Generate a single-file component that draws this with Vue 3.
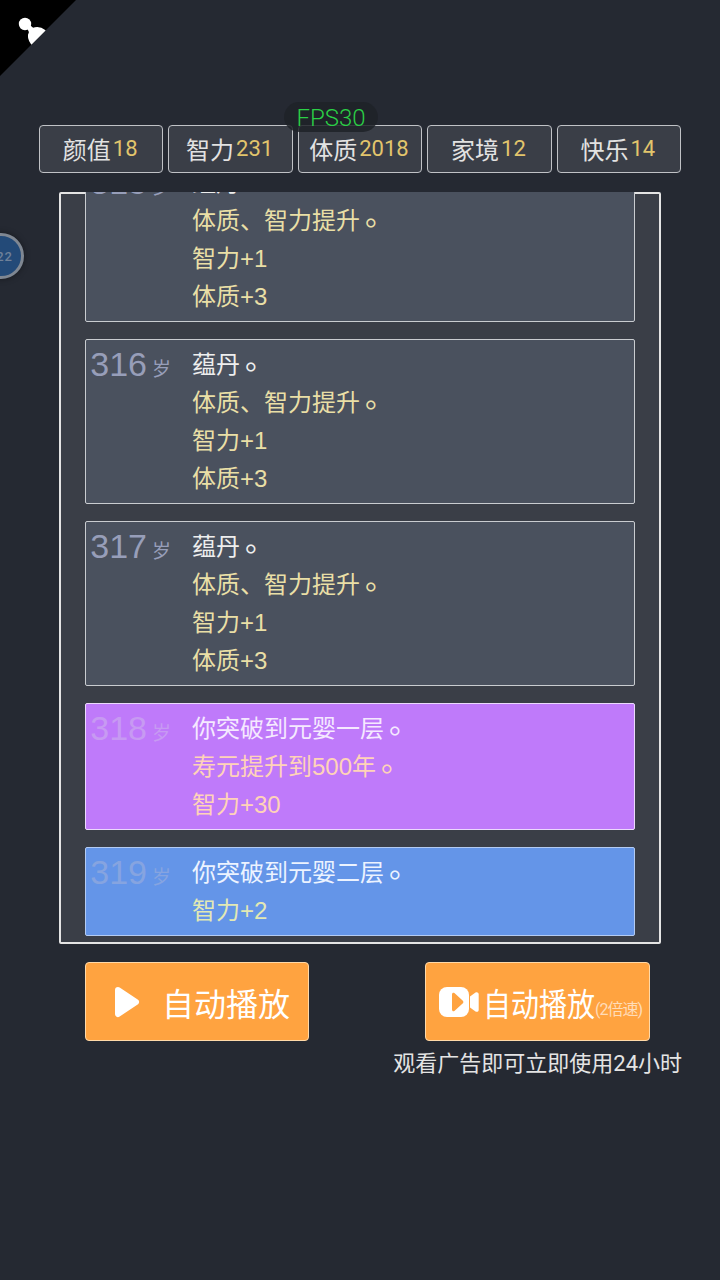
<script setup>
const stats = [
  { name: '颜值', value: 18 },
  { name: '智力', value: 231 },
  { name: '体质', value: 2018 },
  { name: '家境', value: 12 },
  { name: '快乐', value: 14 }
]

const base = ['蕴丹。', '体质、智力提升。', '智力+1', '体质+3']

const rows = [
  { age: 315, lines: base },
  { age: 316, lines: base },
  { age: 317, lines: base },
  { age: 318, grade: 'purple', lines: ['你突破到元婴一层。', '寿元提升到500年。', '智力+30'] },
  { age: 319, grade: 'blue', lines: ['你突破到元婴二层。', '智力+2'] }
]

// 句号单独包一层，位置比字体默认的偏上
const body = (t) => t.replace(/。$/, '')
</script>

<template>
  <div class="page">
    <!-- 左上角 -->
    <div class="corner">
      <svg class="pawn" viewBox="0 0 76 76" width="76" height="76">
        <circle cx="25" cy="24" r="6.200" fill="#fff" />
        <path d="M26 23l7 6c4-2 8-1 12 2L32 44c-3-4-4-8-2-12z" fill="#fff" stroke="#fff" stroke-width="2" stroke-linejoin="round" />
      </svg>
    </div>

    <div class="avatar"><span>22</span></div>
    <div class="fps">FPS30</div>

    <div class="stats">
      <div class="stat" v-for="s in stats" :key="s.name">
        {{ s.name }} <span class="num">{{ s.value }}</span>
      </div>
    </div>

    <div class="panel">
      <div class="list">
        <div class="card" v-for="r in rows" :key="r.age" :class="r.grade">
          <div class="age"><span class="year">{{ r.age }}</span><span class="unit">岁</span></div>
          <div class="lines">
            <div class="line" v-for="(t, i) in r.lines" :key="i" :class="{ first: i === 0 }">
              {{ body(t) }}<span class="stop" v-if="t.endsWith('。')">。</span>
            </div>
          </div>
        </div>
      </div>
    </div>

    <div class="actions">
      <div class="btn">
        <svg class="play" viewBox="0 0 26 32" width="26" height="32">
          <path d="M4 4L22 16L4 28Z" fill="#fff" stroke="#fff" stroke-width="6" stroke-linejoin="round" />
        </svg>
        <span class="btn-text">自动播放</span>
      </div>
      <div class="btn ad">
        <svg class="video" viewBox="0 0 40 32" width="40" height="32">
          <rect x="0" y="1" width="30" height="30" rx="8" fill="#fff" />
          <path d="M31 10.500l5.500-4c1.300-.9 3.200 0 3.200 1.600v15.800c0 1.600-1.900 2.500-3.200 1.600l-5.500-4z" fill="#fff" />
          <path d="M13 8.500c0-1.500 1.200-2.200 2.400-1.500l8.200 7.400c1 .9 1 2.300 0 3.200l-8.200 7.400c-1.200.7-2.400 0-2.400-1.500z" fill="#ffa340" />
        </svg>
        <span class="btn-text tight">自动播放</span><span class="speed">(2倍速)</span>
      </div>
    </div>
    <div class="tip">观看广告即可立即使用24小时</div>
  </div>
</template>

<style>
html,
body {
  margin: 0;
  background: #252932;
}
</style>

<style scoped>
.page {
  position: relative;
  width: 720px;
  height: 1280px;
  overflow: hidden;
  box-sizing: border-box;
  padding-top: 125px;
  background: #252932;
  font-family: Roboto, "Noto Sans CJK SC", sans-serif;
}

.corner {
  position: absolute;
  top: 0;
  left: 0;
  width: 76px;
  height: 76px;
  background: #000;
  clip-path: polygon(0 0, 100% 0, 0 100%);
}

.pawn {
  display: block;
}

.avatar {
  position: absolute;
  top: 233px;
  left: -22px;
  width: 46px;
  height: 46px;
  box-sizing: border-box;
  border: 3px solid #7f8792;
  border-radius: 50%;
  background: #234a78;
  box-shadow: 0 0 6px rgba(0, 0, 0, 0.4);
  display: flex;
  align-items: center;
  justify-content: flex-end;
  padding-right: 8px;
  color: #6f8199;
  font-size: 13px;
  font-weight: 500;
  letter-spacing: 1px;
}

.fps {
  position: absolute;
  top: 102px;
  left: 284px;
  width: 94px;
  height: 30px;
  border-radius: 15px;
  background: rgba(30, 34, 40, 0.85);
  color: #2bd046;
  font-size: 24px;
  font-weight: 300;
  line-height: 32px;
  text-align: center;
  z-index: 2;
}

.stats {
  display: grid;
  grid-template-columns: repeat(5, 1fr);
  gap: 5px;
  margin: 0 39px;
  height: 48px;
}

.stat {
  display: flex;
  align-items: center;
  justify-content: center;
  gap: 2px;
  box-sizing: border-box;
  padding: 0 2px 2px 0;
  border: 1px solid #c0c2c6;
  border-radius: 4px;
  background: #3a3e47;
  color: #e2e2e2;
  font-size: 24px;
  white-space: nowrap;
}

.num {
  color: #e2c56c;
  font-size: 22px;
}

.panel {
  box-sizing: border-box;
  width: 602px;
  height: 752px;
  margin: 19px 0 0 59px;
  border: 2px solid #e4e4e4;
  border-radius: 2px;
  background: #3a3e47;
}

.list {
  box-sizing: border-box;
  height: 750px;
  margin-top: -2px;
  padding: 0 24px 6px;
  overflow: hidden;
  display: flex;
  flex-direction: column;
  justify-content: flex-end;
  gap: 17px;
}

.card {
  flex: none;
  display: flex;
  box-sizing: border-box;
  padding: 6px 0 5px;
  border: 1px solid #c9ccd0;
  border-radius: 2px;
  background: #4a515e;
}

.card.purple {
  background: #bf7afa;
  border-color: #ecd9fd;
}

.card.blue {
  background: #6495e8;
  border-color: #b3cbf3;
}

.age {
  flex: none;
  width: 85px;
  height: 36px;
  display: flex;
  align-items: baseline;
  justify-content: flex-end;
  gap: 5px;
  color: #979eb9;
  line-height: 36px;
}

.year {
  font-family: "Liberation Sans", sans-serif;
  font-size: 34px;
}

.unit {
  font-size: 19px;
}

.purple .age {
  color: #c79af2;
}

.blue .age {
  color: #86a4e0;
}

.lines {
  margin-left: 21px;
  line-height: 38px;
}

.line {
  color: #e9dfa6;
  font-family: "Liberation Sans", "Noto Sans CJK SC", sans-serif;
  font-size: 24px;
}

.line.first {
  color: #eeeeee;
}

.stop {
  display: inline-block;
  transform: translate(8px, -6px) scale(1.25);
}

.purple .line {
  color: #ffd3b8;
}

.purple .line.first {
  color: #f5e9ff;
}

.blue .line {
  color: #e2e9b4;
}

.blue .line.first {
  color: #ecf3ff;
}

.actions {
  display: flex;
  justify-content: space-between;
  margin: 18px 70px 0 85px;
}

.btn {
  display: flex;
  align-items: center;
  box-sizing: border-box;
  width: 224px;
  height: 79px;
  padding-left: 28px;
  border: 1px solid #ffd9a8;
  border-radius: 4px;
  background: #ffa340;
  color: #fff;
}

.btn.ad {
  width: 225px;
  padding-left: 13px;
}

.play {
  flex: none;
  margin-right: 22px;
}

.video {
  flex: none;
  margin-right: 4px;
}

.btn-text {
  font-size: 32px;
  white-space: nowrap;
}

.btn-text.tight {
  display: inline-block;
  width: 112px;
  transform: scaleX(0.875);
  transform-origin: left center;
}

.speed {
  font-size: 16px;
  letter-spacing: -1px;
  margin-top: 12px;
  white-space: nowrap;
  color: #ffdcb8;
}

.tip {
  margin: 9px 38px 0 0;
  text-align: right;
  color: #e4e4e4;
  font-size: 22px;
  line-height: 28px;
}
</style>
